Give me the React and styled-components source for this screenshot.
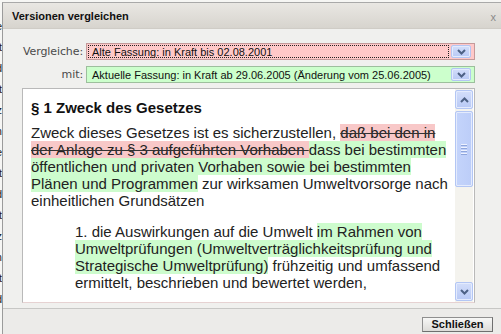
import React from "react";
import styled, { createGlobalStyle } from "styled-components";

const Global = createGlobalStyle`
  html, body { margin: 0; padding: 0; background: #ffffff; }
  #root { width: 501px; height: 334px; }
`;

const Screen = styled.div`
  width: 501px;
  height: 334px;
  display: flex;
  overflow: hidden;
  background: #f6f6f4;
`;

const Backdrop = styled.div`
  width: 2px;
  flex: 0 0 2px;
  overflow: hidden;
  direction: rtl;
  padding-top: 20px;
  display: flex;
  flex-direction: column;
  gap: 9px;
`;

const BackLine = styled.div`
  font: 11px "Liberation Sans", Arial, sans-serif;
  color: #222;
  white-space: nowrap;
  line-height: 12px;
`;

const Dialog = styled.div`
  flex: 1;
  margin-top: 2px;
  border-top: 1px solid #a9a9a9;
  border-left: 1px solid #9b9b9b;
  display: flex;
  flex-direction: column;
  background: #f0f0ee;
  min-width: 0;
`;

const TitleBar = styled.div`
  height: 25px;
  flex: 0 0 25px;
  display: flex;
  align-items: center;
  justify-content: space-between;
  padding: 0 5px 0 9px;
  background: linear-gradient(#e9e7e3, #d7d4ce);
  border-bottom: 1px solid #cfccc6;
`;

const Title = styled.span`
  font: bold 11px "Liberation Sans", Arial, sans-serif;
  color: #111;
`;

const Close = styled.span`
  font: 11px "Liberation Sans", Arial, sans-serif;
  color: #8a8a8a;
  margin-top: 2px;
`;

const Body = styled.div`
  padding: 14px 0 5px 0;
  display: flex;
  flex-direction: column;
`;

const Row = styled.div`
  display: flex;
  align-items: center;
  margin-bottom: ${(p) => p.$gap}px;
`;

const Label = styled.label`
  width: 83px;
  flex: 0 0 83px;
  text-align: right;
  padding-right: 3px;
  box-sizing: border-box;
  font: 11px "DejaVu Sans", Verdana, sans-serif;
  color: #4a4a4a;
  letter-spacing: -0.1px;
`;

const Select = styled.div`
  width: 389px;
  height: 17px;
  box-sizing: border-box;
  display: flex;
  align-items: center;
  padding: 1px;
  gap: 2px;
  background: ${(p) => (p.$tone === "red" ? "#ffc9c9" : "#ccffcc")};
  border: 1px solid ${(p) => (p.$tone === "red" ? "#c49a9a" : "#9dbf9d")};
`;

const SelectText = styled.div`
  flex: 1;
  height: 13px;
  box-sizing: border-box;
  display: flex;
  align-items: center;
  padding-left: 4px;
  font: 11px "Liberation Sans", Arial, sans-serif;
  color: #111;
  white-space: nowrap;
  overflow: hidden;
  outline: ${(p) => (p.$focused ? "1px dotted #222" : "none")};
  outline-offset: -1px;
`;

const XpButton = styled.div`
  box-sizing: border-box;
  display: flex;
  align-items: center;
  justify-content: center;
  background: linear-gradient(#d3defa, #b8c9f5);
  border: 1px solid #b3c6f4;
  box-shadow: inset 0 0 0 1px #e4ebfd;
  border-radius: 2px;
`;

const ComboButton = styled(XpButton)`
  width: 20px;
  height: 13px;
  margin-right: 2px;
`;

const Chevron = ({ up }) => (
  <svg width="9" height="6" viewBox="0 0 9 6">
    <polyline
      points={up ? "1,5 4.5,1.5 8,5" : "1,1 4.5,4.5 8,1"}
      fill="none"
      stroke="#4d6185"
      strokeWidth="2"
    />
  </svg>
);

const ContentBox = styled.div`
  margin-top: 5px;
  margin-left: 19px;
  width: 453px;
  height: 215px;
  box-sizing: border-box;
  background: #ffffff;
  border: 1px solid #b9b9b9;
  border-bottom-color: #e6d2d2;
  display: flex;
`;

const Scroller = styled.div`
  flex: 1;
  overflow: hidden;
  padding: 10px 2px 0 8px;
  font: 15px/17px "Liberation Sans", Arial, sans-serif;
  color: #222;
`;

const Heading = styled.div`
  font-weight: bold;
  color: #111;
  margin-bottom: 8px;
`;

const Para = styled.div`
  padding-left: ${(p) => p.$indent || 0}px;
  margin-bottom: 14px;
`;

const Del = styled.span`
  background: #f8c8c8;
  text-decoration: line-through;
  text-decoration-color: #333;
`;

const Ins = styled.span`
  background: #cdfccd;
`;

const ScrollBar = styled.div`
  width: 18px;
  flex: 0 0 18px;
  margin-right: 1px;
  padding: 1px 0;
  box-sizing: border-box;
  display: flex;
  flex-direction: column;
  background: #f4f3ee;
`;

const ScrollBtn = styled(XpButton)`
  height: 19px;
  flex: 0 0 19px;
`;

const Thumb = styled(XpButton)`
  height: 76px;
  margin-top: 2px;
  flex-direction: column;
  gap: 1px;
  background: linear-gradient(90deg, #c4d4fb, #bccdf8);
`;

const Grip = styled.div`
  width: 6px;
  height: 1px;
  background: #eef2fe;
  border-bottom: 1px solid #8fa6dc;
`;

const Track = styled.div`
  flex: 1;
`;

const Footer = styled.div`
  flex: 1;
  border-top: 1px solid #c7c7c5;
  background: #ecebe9;
  display: flex;
  justify-content: flex-end;
  align-items: flex-start;
  padding: 8px 8px 0 0;
`;

const Button = styled.button`
  width: 71px;
  height: 15px;
  padding: 0;
  box-sizing: border-box;
  font: bold 11px "Liberation Sans", Arial, sans-serif;
  color: #111;
  background: linear-gradient(#f7f7f6, #dddcd9);
  border: 1px solid #8f8f8f;
  border-right-color: #6f6f6f;
  border-bottom-color: #6f6f6f;
  display: flex;
  align-items: center;
  justify-content: center;
  line-height: 11px;
`;

export default function App() {
  return (
    <>
      <Global />
      <Screen>
        <Backdrop>
          <BackLine>Seite</BackLine>
          <BackLine>Text</BackLine>
          <BackLine>und</BackLine>
          <BackLine>Recht</BackLine>
          <BackLine>Gesetz</BackLine>
          <BackLine>Norm</BackLine>
          <BackLine>Seite</BackLine>
          <BackLine>Text</BackLine>
          <BackLine>und</BackLine>
          <BackLine>Recht</BackLine>
          <BackLine>Gesetz</BackLine>
          <BackLine>Norm</BackLine>
          <BackLine>Text</BackLine>
          <BackLine>und</BackLine>
        </Backdrop>
        <Dialog>
          <TitleBar>
            <Title>Versionen vergleichen</Title>
            <Close>x</Close>
          </TitleBar>
          <Body>
            <Row $gap={6}>
              <Label>Vergleiche:</Label>
              <Select $tone="red">
                <SelectText $focused>Alte Fassung: in Kraft bis 02.08.2001</SelectText>
                <ComboButton>
                  <Chevron />
                </ComboButton>
              </Select>
            </Row>
            <Row $gap={0}>
              <Label>mit:</Label>
              <Select $tone="green">
                <SelectText>
                  Aktuelle Fassung: in Kraft ab 29.06.2005 (Änderung vom 25.06.2005)
                </SelectText>
                <ComboButton>
                  <Chevron />
                </ComboButton>
              </Select>
            </Row>
            <ContentBox>
              <Scroller>
                <Heading>§ 1 Zweck des Gesetzes</Heading>
                <Para>
                  Zweck dieses Gesetzes ist es sicherzustellen,{" "}
                  <Del>daß bei den in der Anlage zu § 3 aufgeführten Vorhaben </Del>
                  <Ins>
                    dass bei bestimmten öffentlichen und privaten Vorhaben sowie bei
                    bestimmten Plänen und Programmen
                  </Ins>{" "}
                  zur wirksamen Umweltvorsorge nach einheitlichen Grundsätzen
                </Para>
                <Para $indent={44}>
                  1. die Auswirkungen auf die Umwelt{" "}
                  <Ins>
                    im Rahmen von Umweltprüfungen (Umweltverträglichkeitsprüfung und
                    Strategische Umweltprüfung)
                  </Ins>{" "}
                  frühzeitig und umfassend ermittelt, beschrieben und bewertet werden,
                </Para>
                <Para $indent={44}>
                  2. das Ergebnis der durchgeführten Umweltprüfungen
                </Para>
              </Scroller>
              <ScrollBar>
                <ScrollBtn>
                  <Chevron up />
                </ScrollBtn>
                <Thumb>
                  <Grip />
                  <Grip />
                  <Grip />
                  <Grip />
                </Thumb>
                <Track />
                <ScrollBtn>
                  <Chevron />
                </ScrollBtn>
              </ScrollBar>
            </ContentBox>
          </Body>
          <Footer>
            <Button>Schließen</Button>
          </Footer>
        </Dialog>
      </Screen>
    </>
  );
}
